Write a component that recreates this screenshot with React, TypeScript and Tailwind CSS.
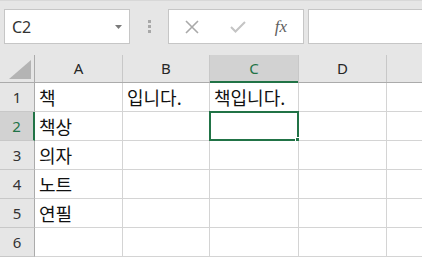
import React from "react";

const cols = [
  { key: "A", w: "w-[88px]" },
  { key: "B", w: "w-[87px]" },
  { key: "C", w: "w-[89px]" },
  { key: "D", w: "w-[88px]" },
];

const data: Record<string, string> = {
  A1: "책",
  B1: "입니다.",
  C1: "책입니다.",
  A2: "책상",
  A3: "의자",
  A4: "노트",
  A5: "연필",
};

const uiFont = { fontFamily: '"Noto Sans", "Liberation Sans", sans-serif' };
const cellFont = { fontFamily: '"Noto Sans CJK KR", "Noto Sans", sans-serif' };

const Toolbar = () => (
  <div className="flex h-[55px] items-start bg-[#e6e6e6] pt-[8px] pl-[4px] border-t border-[#d8d8d8]">
    <div className="flex h-[35px] w-[126px] items-center justify-between border border-[#c6c6c6] bg-white pl-[7px] pr-[7px]">
      <span className="text-[16px] text-[#333]" style={uiFont}>
        C2
      </span>
      <svg width="7" height="4" viewBox="0 0 7 4">
        <path d="M0 0 L7 0 L3.5 4 Z" fill="#7a7a7a" />
      </svg>
    </div>
    <div className="flex h-[35px] w-[38px] flex-col items-center justify-center gap-[2px]">
      <div className="h-[3px] w-[3px] bg-[#a8a8a8]" />
      <div className="h-[3px] w-[3px] bg-[#a8a8a8]" />
      <div className="h-[3px] w-[3px] bg-[#a8a8a8]" />
    </div>
    <div className="flex h-[35px] w-[136px] items-center border border-[#c6c6c6] bg-white">
      <div className="flex w-[46px] justify-center">
        <svg width="14" height="14" viewBox="0 0 14 14">
          <path d="M1 1 L13 13 M13 1 L1 13" stroke="#a9a9a9" strokeWidth="1.6" />
        </svg>
      </div>
      <div className="flex w-[46px] justify-center">
        <svg width="16" height="12" viewBox="0 0 16 12">
          <path d="M1 6 L5.5 10.5 L15 1" stroke="#c4c4c4" strokeWidth="2" fill="none" />
        </svg>
      </div>
      <div className="flex w-[40px] justify-center">
        <span
          className="text-[17px] italic text-[#5e5e5e]"
          style={{ fontFamily: '"Liberation Serif", serif' }}
        >
          fx
        </span>
      </div>
    </div>
    <div className="ml-[4px] h-[35px] flex-1 border-y border-l border-[#c6c6c6] bg-white" />
  </div>
);

const ColumnHeader = () => (
  <div className="flex h-[28px] border-b border-[#ababab] bg-[#e6e6e6]">
    <div className="flex h-full w-[35px] shrink-0 items-end justify-end border-r border-[#ababab] pb-[3px] pr-[3px]">
      <svg width="22" height="19" viewBox="0 0 22 19">
        <path d="M22 0 L22 19 L0 19 Z" fill="#b4b4b4" />
      </svg>
    </div>
    {cols.map((c) => {
      const active = c.key === "C";
      return (
        <div
          key={c.key}
          className={`flex h-full ${c.w} shrink-0 items-center justify-center border-r ${
            active
              ? "border-[#c8c8c8] bg-[#d2d2d2] text-[#217346] shadow-[inset_0_-1px_0_#217346]"
              : "border-[#c8c8c8] text-[#262626]"
          } text-[15px]`}
          style={uiFont}
        >
          {c.key}
        </div>
      );
    })}
    <div className="h-full flex-1" />
  </div>
);

const Row = ({ n }: { n: number }) => {
  const activeRow = n === 2;
  return (
    <div className="flex h-[29px]">
      <div
        className={`flex h-full w-[35px] shrink-0 items-center justify-center border-b border-r text-[15px] ${
          activeRow
            ? "border-b-[#c8c8c8] border-r-[#217346] border-r-2 bg-[#d2d2d2] text-[#217346]"
            : "border-b-[#c8c8c8] border-r-[#ababab] bg-[#e6e6e6] text-[#333]"
        }`}
        style={uiFont}
      >
        {n}
      </div>
      {cols.map((c) => {
        const id = `${c.key}${n}`;
        const selected = id === "C2";
        return (
          <div
            key={id}
            className={`relative flex h-full ${c.w} shrink-0 items-center border-b border-r border-[#d4d4d4] bg-white pl-[4px] text-[18px] text-[#111]`}
            style={cellFont}
          >
            <span className="whitespace-nowrap leading-none">{data[id] ?? ""}</span>
            {selected && (
              <>
                <div className="absolute -left-[1px] -top-[1px] h-[30px] w-[90px] border-2 border-[#217346]" />
                <div className="absolute -bottom-[3px] -right-[3px] h-[6px] w-[6px] border border-white bg-[#217346]" />
              </>
            )}
            {n === 1 && c.key === "C" && (
              <div className="absolute -top-[1px] left-0 h-px w-full bg-[#217346]" />
            )}
          </div>
        );
      })}
      <div className="h-full flex-1 border-b border-[#d4d4d4] bg-white" />
    </div>
  );
};

export default function App() {
  return (
    <div className="h-[257px] w-[422px] overflow-hidden bg-white">
      <Toolbar />
      <ColumnHeader />
      {[1, 2, 3, 4, 5, 6].map((n) => (
        <Row key={n} n={n} />
      ))}
    </div>
  );
}
